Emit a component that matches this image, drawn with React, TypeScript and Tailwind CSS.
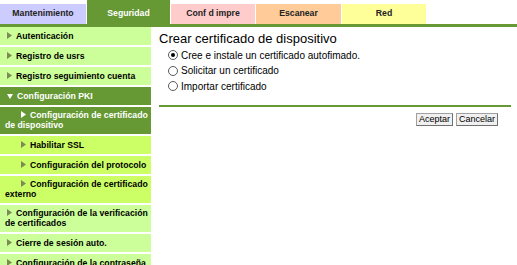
import React from "react";

type Item = {
  label: string;
  level: 0 | 1;
  tone: "light" | "sub" | "dark";
  open?: boolean;
  wrap?: boolean;
};

const tabs = [
  { label: "Mantenimiento", w: "w-[86px]", cls: "bg-[#ccccff] text-[#222]" },
  { label: "Seguridad", w: "w-[83px]", cls: "bg-[#669933] text-white", active: true },
  { label: "Conf d impre", w: "w-[84px]", cls: "bg-[#ffcccc] text-[#222]" },
  { label: "Escanear", w: "w-[85px]", cls: "bg-[#ffcc99] text-[#222]" },
  { label: "Red", w: "w-[84px]", cls: "bg-[#ffff99] text-[#222]" },
];

const menu: Item[] = [
  { label: "Autenticación", level: 0, tone: "light" },
  { label: "Registro de usrs", level: 0, tone: "light" },
  { label: "Registro seguimiento cuenta", level: 0, tone: "light" },
  { label: "Configuración PKI", level: 0, tone: "dark", open: true },
  { label: "Configuración de certificado de dispositivo", level: 1, tone: "dark", wrap: true },
  { label: "Habilitar SSL", level: 1, tone: "sub" },
  { label: "Configuración del protocolo", level: 1, tone: "sub" },
  { label: "Configuración de certificado externo", level: 1, tone: "sub", wrap: true },
  { label: "Configuración de la verificación de certificados", level: 0, tone: "light", wrap: true },
  { label: "Cierre de sesión auto.", level: 0, tone: "light" },
  { label: "Configuración de la contraseña", level: 0, tone: "light" },
];

function Arrow({ open, color }: { open?: boolean; color: string }) {
  return open ? (
    <svg width="6" height="6" viewBox="0 0 6 6" className="inline-block align-[0px]">
      <path d="M0 1 L6 1 L3 6 Z" fill={color} />
    </svg>
  ) : (
    <svg width="5" height="7" viewBox="0 0 5 7" className="inline-block align-[0px]">
      <path d="M0 0 L5 3.5 L0 7 Z" fill={color} />
    </svg>
  );
}

function MenuRow({ item }: { item: Item }) {
  const bg =
    item.tone === "dark"
      ? "bg-[#669933] text-white"
      : item.tone === "sub"
      ? "bg-[#ccff66] text-black"
      : "bg-[#ccff99] text-black";
  const arrowColor = item.tone === "dark" ? "#ffffff" : "#7d8a55";
  return (
    <div
      className={`${bg} pl-[5px] pr-[2px] py-[4px] text-[8.7px] font-bold ${
        item.wrap ? "leading-[9.5px]" : "leading-[10px]"
      }`}
    >
      <span className={item.level === 1 ? "ml-[16px] mr-[4px]" : "ml-[2px] mr-[4px]"}>
        <Arrow open={item.open} color={arrowColor} />
      </span>
      {item.label}
    </div>
  );
}

function Radio({ checked, label }: { checked?: boolean; label: string }) {
  return (
    <div className="flex h-[15.5px] items-center pl-[9px]">
      <span className="flex h-[10px] w-[10px] items-center justify-center rounded-full border border-[#5a5a5a] bg-white">
        {checked && <span className="h-[4px] w-[4px] rounded-full bg-black" />}
      </span>
      <span className="ml-[3px] text-[10px] text-black">{label}</span>
    </div>
  );
}

export default function App() {
  return (
    <div className="h-[265px] w-[517px] overflow-hidden bg-white font-['Liberation_Sans',Arial,sans-serif]">
      <div className="flex h-[24px] items-end gap-[1px]">
        {tabs.map((t) => (
          <div
            key={t.label}
            className={`${t.w} ${t.cls} ${t.active ? "h-[24px] pt-[4px]" : "h-[20px]"} flex items-center justify-center text-[8.7px] font-bold`}
          >
            {t.label}
          </div>
        ))}
      </div>
      <div className="h-[3px] bg-[#669933]" />
      <div className="flex">
        <div className="flex w-[151px] shrink-0 flex-col gap-[2px]">
          {menu.map((m) => (
            <MenuRow key={m.label} item={m} />
          ))}
        </div>
        <div className="flex-1 pl-[8px] pr-[6px]">
          <div className="mt-[4px] text-[13px] leading-[15px] text-black">
            Crear certificado de dispositivo
          </div>
          <div className="mt-[1.5px]">
            <Radio checked label="Cree e instale un certificado autofimado." />
            <Radio label="Solicitar un certificado" />
            <Radio label="Importar certificado" />
          </div>
          <div className="mt-[11px] h-[2px] bg-[#669933]" />
          <div className="mt-[6px] flex justify-end gap-[3px] pr-[13px]">
            <button className="h-[13px] border border-[#a0a0a0] border-b-[#707070] border-r-[#707070] bg-[#f0f0f0] px-[2px] text-[9px] leading-[11px] text-black">
              Aceptar
            </button>
            <button className="h-[13px] border border-[#a0a0a0] border-b-[#707070] border-r-[#707070] bg-[#f0f0f0] px-[2px] text-[9px] leading-[11px] text-black">
              Cancelar
            </button>
          </div>
        </div>
      </div>
    </div>
  );
}
